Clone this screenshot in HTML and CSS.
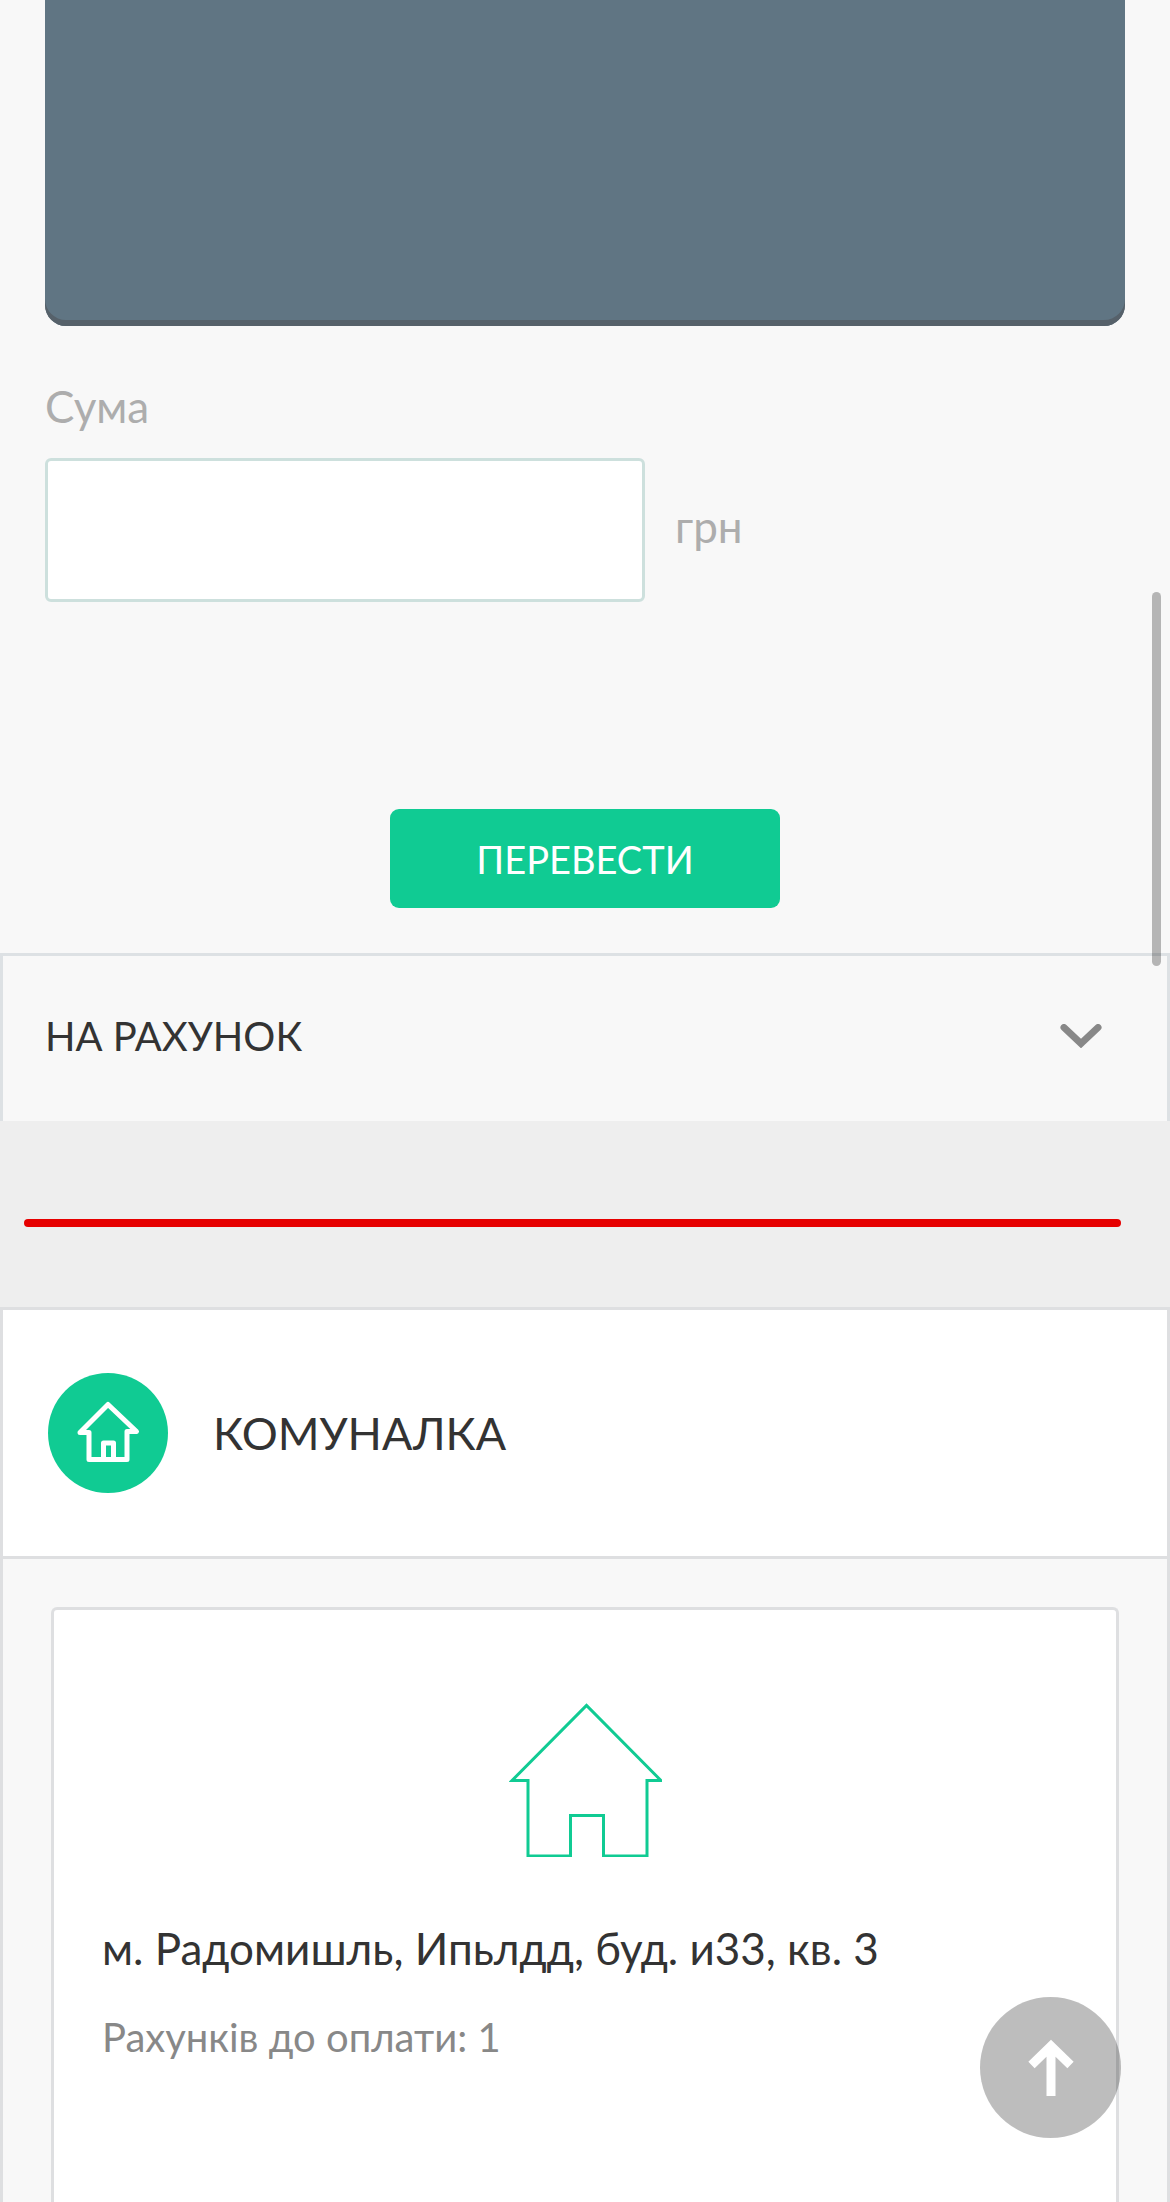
FILE: index.html
```html
<!DOCTYPE html>
<html lang="uk">
<head>
<meta charset="utf-8">
<meta name="viewport" content="width=device-width, initial-scale=1">
<title>Комуналка</title>
<link rel="stylesheet" href="styles.css">
</head>
<body>
<main class="page">
  <form class="transfer">
    <div class="bank-card"></div>
    <label class="field-label" for="amount">Сума</label>
    <div class="amount-row">
      <input class="amount-input" id="amount" type="text" inputmode="decimal">
      <span class="currency">грн</span>
    </div>
    <button class="submit" type="button">ПЕРЕВЕСТИ</button>
  </form>

  <button class="accordion" type="button" aria-expanded="false">
    <span>НА РАХУНОК</span>
    <svg class="chevron" viewBox="0 0 42 24" aria-hidden="true"><path d="M4 3.500 21 19.500 38 3.500" fill="none" stroke="#888" stroke-width="7" stroke-linecap="round"/></svg>
  </button>

  <div class="divider"><hr class="divider-line"></div>

  <section class="utilities">
    <header class="utilities-header">
      <svg class="badge" viewBox="0 0 120 120" aria-hidden="true">
        <circle cx="60" cy="60" r="60" fill="#10cb93"/>
        <path d="M41 59.500H32L60 31.500 88.500 58.500H79V86.500H41ZM55.500 86V70H65.500V86" fill="none" stroke="#fff" stroke-width="5" stroke-linejoin="round"/>
      </svg>
      <h2 class="title">КОМУНАЛКА</h2>
    </header>
    <div class="utilities-body">
      <article class="address-card">
        <svg class="house" viewBox="0 0 153 154" aria-hidden="true"><path d="M3 77.500 77.500 2.500 152 77.500H138V153H94.500V112.500H61.500V153H19V77.500Z" fill="none" stroke="#10cb93" stroke-width="3"/></svg>
        <h3 class="address">м. Радомишль, Ипьлдд, буд. и33, кв. 3</h3>
        <p class="bills">Рахунків до оплати: 1</p>
      </article>
    </div>
  </section>
</main>

<div class="scroll-thumb"></div>
<button class="to-top" type="button" aria-label="Вгору">
  <svg class="arrow" viewBox="0 0 46 58" aria-hidden="true"><path d="M23 57V6M3.500 26 23 7 42.500 26" fill="none" stroke="#fff" stroke-width="9"/></svg>
</button>
</body>
</html>
```
FILE: styles.css
```css
* {
  box-sizing: border-box;
}

body {
  margin: 0;
  background: #f8f8f8;
  color: #333;
  font-family: Lato, "Open Sans", sans-serif;
}

button {
  border: 0;
  font-family: inherit;
  cursor: pointer;
}

.page {
  display: flex;
  flex-direction: column;
  min-height: 100vh;
}

.transfer {
  display: flex;
  flex-direction: column;
  padding: 0 45px 45px;
}

.bank-card {
  height: 326px;
  background: #607583;
  border-radius: 0 0 21px 21px;
  box-shadow: inset 0 -6px #56616a;
}

.field-label {
  margin-top: 54px;
  color: #adadad;
  font-size: 44px;
  line-height: 52px;
}

.amount-row {
  display: flex;
  align-items: center;
  gap: 30px;
  margin-top: 26px;
}

.amount-input {
  width: 600px;
  max-width: 75%;
  height: 144px;
  padding: 0 30px;
  background: #fff;
  border: 3px solid #cde0dd;
  border-radius: 6px;
  color: inherit;
  font: inherit;
  font-size: 44px;
}

.currency {
  padding-bottom: 8px;
  color: #adadad;
  font-size: 44px;
  line-height: 52px;
}

.submit {
  align-self: center;
  width: 390px;
  height: 99px;
  margin-top: 207px;
  background: #10cb93;
  border-radius: 9px;
  color: #fff;
  font-size: 38px;
}

.accordion {
  display: flex;
  align-items: center;
  justify-content: space-between;
  padding: 55px 65px 60px 42px;
  background: #f8f8f8;
  border: 3px solid #dde1e4;
  border-bottom: 0;
  color: #333;
  font-size: 40px;
  line-height: 50px;
}

.chevron {
  width: 42px;
  height: 24px;
}

.divider {
  padding: 98px 49px 80px 24px;
  background: #eee;
}

.divider-line {
  height: 8px;
  margin: 0;
  background: #e60000;
  border: 0;
  border-radius: 4px;
}

.utilities {
  display: flex;
  flex: 1;
  flex-direction: column;
  border: 3px solid #dedfe1;
  border-bottom: 0;
}

.utilities-header {
  display: flex;
  align-items: center;
  gap: 45px;
  padding: 63px 45px;
  background: #fff;
  border-bottom: 3px solid #dedfe1;
}

.badge {
  width: 120px;
  height: 120px;
}

.title {
  margin: 0;
  font-size: 45px;
  font-weight: 400;
  line-height: 52px;
}

.utilities-body {
  display: flex;
  flex: 1;
  flex-direction: column;
  padding: 48px 48px 0;
}

.address-card {
  display: flex;
  flex: 1;
  flex-direction: column;
  padding: 93px 48px;
  background: #fff;
  border: 3px solid #dedfe1;
  border-bottom: 0;
  border-radius: 6px 6px 0 0;
}

.house {
  align-self: center;
  width: 153px;
  height: 154px;
}

.address {
  margin: 65px 0 0;
  font-size: 44px;
  font-weight: 400;
  line-height: 52px;
}

.bills {
  margin: 38px 0 0;
  color: #888;
  font-size: 40px;
  line-height: 50px;
}

.scroll-thumb {
  position: fixed;
  top: 592px;
  right: 9px;
  width: 9px;
  height: 374px;
  background: rgba(0, 0, 0, 0.27);
  border-radius: 5px;
}

.to-top {
  position: fixed;
  right: 49px;
  bottom: 64px;
  display: flex;
  align-items: center;
  justify-content: center;
  width: 141px;
  height: 141px;
  padding: 0;
  background: rgba(0, 0, 0, 0.26);
  border-radius: 50%;
}

.arrow {
  width: 46px;
  height: 58px;
}
```
